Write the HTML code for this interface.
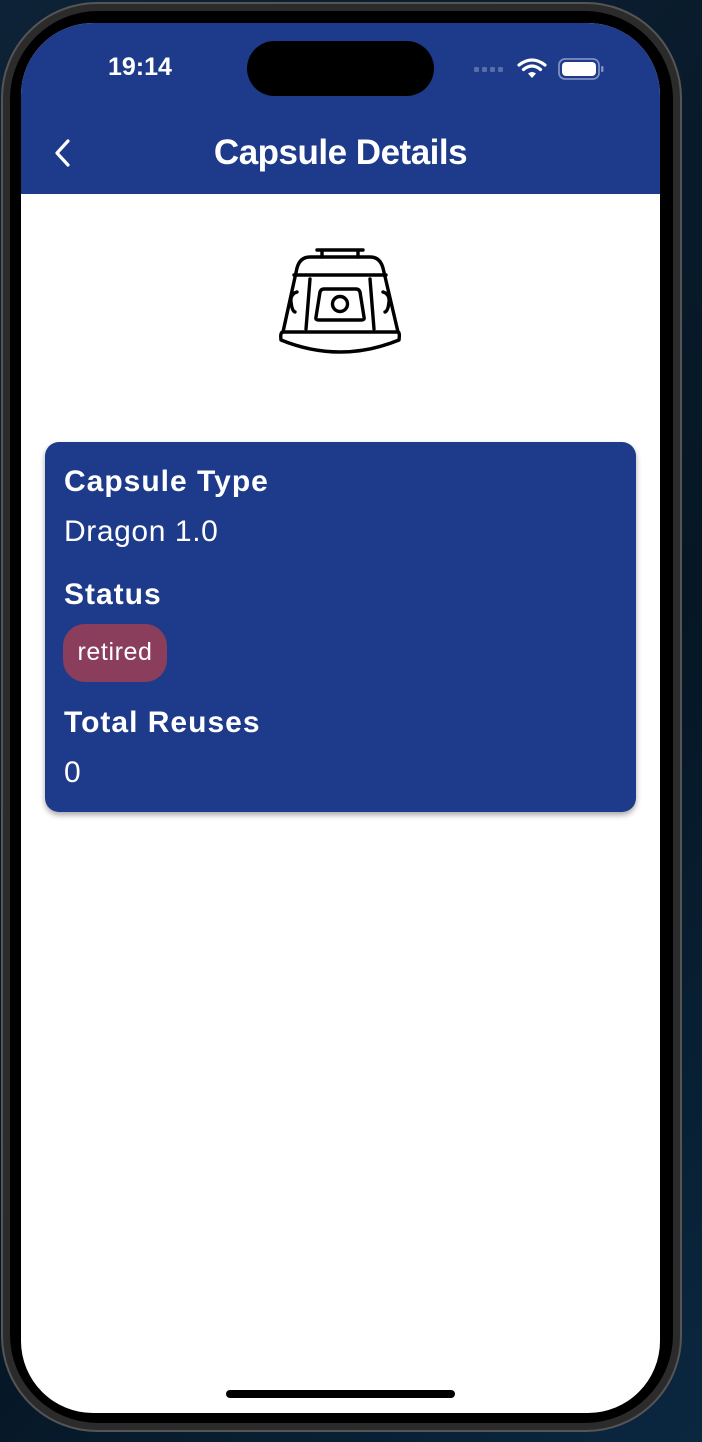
<!DOCTYPE html>
<html><head><meta charset="utf-8"><style>
*{margin:0;padding:0;box-sizing:border-box}
html,body{width:702px;height:1442px;overflow:hidden;background:linear-gradient(135deg,#0d2236,#061624 60%,#0a2740);font-family:"Liberation Sans",sans-serif}
.frame{position:absolute;left:1px;top:2px;width:681px;height:1430px;border-radius:96px;background:#2b2b2b;border:2px solid #555}
.bez{position:absolute;left:7px;top:7px;right:7px;bottom:7px;border-radius:88px;background:#000}
.screen{position:absolute;left:21px;top:23px;width:639px;height:1390px;border-radius:72px;background:#fff;overflow:hidden}
.hdr{position:absolute;left:0;top:0;width:100%;height:171px;background:#1e3a8a}
.time{position:absolute;left:87px;top:30px;color:#fff;font-size:25px;font-weight:bold}
.island{position:absolute;left:226px;top:18px;width:187px;height:55px;border-radius:28px;background:#000}
.title{position:absolute;left:0;width:100%;top:110px;text-align:center;color:#fff;font-size:35px;font-weight:bold;letter-spacing:-0.5px}
.card{position:absolute;left:45px;top:442px;width:591px;height:370px;background:#1e3a8a;border-radius:14px;box-shadow:0 3px 6px rgba(0,0,0,.35);color:#fff}
.l{position:absolute;left:19px;font-size:30px;font-weight:bold;letter-spacing:1px}
.v{position:absolute;left:19px;font-size:30px;letter-spacing:.6px}
.pill{position:absolute;left:18px;top:182px;width:104px;height:58px;border-radius:22px;background:#8b3d5c;font-size:25px;line-height:56px;text-align:center;letter-spacing:.6px}
.home{position:absolute;left:226px;top:1390px;width:229px;height:8px;border-radius:4px;background:#000}
</style></head><body>
<div class="frame"><div class="bez"></div></div>
<div class="screen">
<div class="hdr">
<div class="time">19:14</div>
<div class="island"></div>
<svg style="position:absolute;left:450px;top:34px" width="140" height="24" viewBox="0 0 140 24">
<g fill="#5a6ea8"><rect x="3" y="10" width="5" height="5" rx="1.5"/><rect x="11" y="10" width="5" height="5" rx="1.5"/><rect x="19" y="10" width="5" height="5" rx="1.5"/><rect x="27" y="10" width="5" height="5" rx="1.5"/></g>
<g fill="none" stroke="#fff" stroke-width="3.2" stroke-linecap="round"><path d="M48 8 Q61 -2 74 8"/><path d="M52.5 12.5 Q61 5.5 69.5 12.5"/></g>
<path d="M57 16.5 Q61 13.5 65 16.5 L61 21 Z" fill="#fff"/>
<rect x="88" y="2" width="40" height="20" rx="6" fill="none" stroke="#7f8fc0" stroke-width="1.8"/>
<rect x="91" y="5" width="34" height="14" rx="4" fill="#fff"/>
<rect x="130" y="9" width="2.5" height="6" rx="1" fill="#7f8fc0"/>
</svg>
<svg style="position:absolute;left:30px;top:115px" width="24" height="30" viewBox="0 0 24 30"><path d="M17 3 L6 15 L17 27" fill="none" stroke="#fff" stroke-width="3.2" stroke-linecap="round" stroke-linejoin="round"/></svg>
<div class="title">Capsule Details</div>
</div>
</div>
<svg style="position:absolute;left:260px;top:232px" width="160" height="130" viewBox="0 0 160 130" fill="none" stroke="#000" stroke-width="3.4" stroke-linejoin="round" stroke-linecap="round">
<path d="M57 18 H103 M62 18 V25 M98 18 V25"/>
<path d="M23 100 L37 36 Q40 25 50 25 H110 Q120 25 123 36 L138 100 Z"/>
<path d="M34 43 H126"/>
<path d="M50 47 L46 97 M110 47 L114 97"/>
<path d="M60 60 Q61 57 64 57 H96 Q99 57 100 60 L104 85 Q105 88 101 88 H59 Q55 88 56 85 Z"/>
<circle cx="80" cy="72" r="7.5"/>
<path d="M37 60 Q30 62 31 70 Q32 79 35 80 M123 60 Q130 62 129 70 Q128 79 125 80"/>
<path d="M23 100 Q20 100 21 108 Q80 132 139 108 Q140 100 138 100"/>
</svg>
<div class="card">
<div class="l" style="top:23px">Capsule Type</div>
<div class="v" style="top:73px">Dragon 1.0</div>
<div class="l" style="top:136px">Status</div>
<div class="pill">retired</div>
<div class="l" style="top:264px">Total Reuses</div>
<div class="v" style="top:314px">0</div>
</div>
<div class="home"></div>
</body></html>
